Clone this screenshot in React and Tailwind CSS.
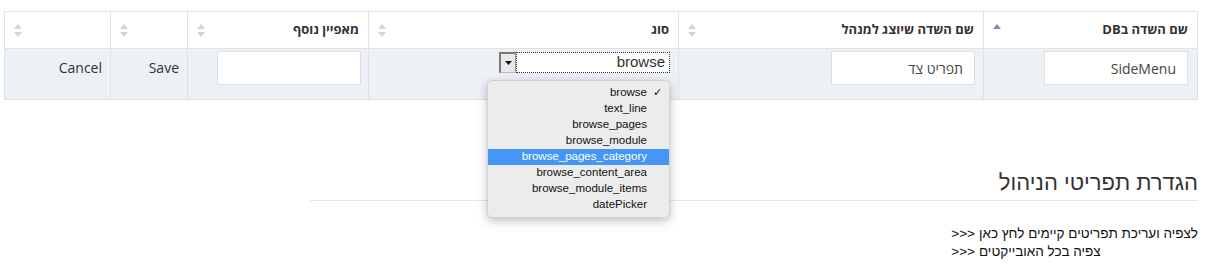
import React from "react";

const SortIcon = ({ active }) => (
  <svg width="8" height="13" viewBox="0 0 8 13" className="shrink-0">
    <polygon points="4,0 8,5 0,5" fill={active ? "#7f82d9" : "#d4d4d4"} />
    {!active && <polygon points="0,8 8,8 4,13" fill="#d4d4d4" />}
  </svg>
);

const columns = [
  { title: "שם השדה בDB", width: "w-[214px]", active: true },
  { title: "שם השדה שיוצג למנהל", width: "w-[305px]" },
  { title: "סוג", width: "w-[310px]" },
  { title: "מאפיין נוסף", width: "w-[181px]" },
  { title: "", width: "w-[77px]" },
  { title: "", width: "w-[106px]" },
];

const options = [
  "browse",
  "text_line",
  "browse_pages",
  "browse_module",
  "browse_pages_category",
  "browse_content_area",
  "browse_module_items",
  "datePicker",
];

const links = ["לצפיה ועריכת תפריטים קיימים לחץ כאן", "צפיה בכל האובייקטים"];

const TextBox = ({ value }) => (
  <input
    readOnly
    value={value}
    dir="ltr"
    className="h-[34px] w-[144px] border border-[#dcdfe3] bg-white px-[11px] text-right text-[14px] text-[#444] outline-none"
  />
);

export default function App() {
  return (
    <div
      dir="rtl"
      className="h-[270px] w-[1206px] overflow-hidden bg-white pl-[5px] pr-[8px] pt-[11px] text-[#333]"
      style={{ fontFamily: '"Open Sans", "Liberation Sans", sans-serif' }}
    >
      <table className="w-[1193px] table-fixed border-collapse border border-[#dedede]">
        <colgroup>
          {columns.map((c, i) => (
            <col key={i} className={c.width} />
          ))}
        </colgroup>
        <thead>
          <tr>
            {columns.map((c, i) => (
              <th
                key={i}
                className="h-[37px] border border-[#e2e2e2] bg-white px-[9px] text-right text-[13px] font-bold"
              >
                <div className="flex items-center justify-between">
                  <span>{c.title}</span>
                  <SortIcon active={c.active} />
                </div>
              </th>
            ))}
          </tr>
        </thead>
        <tbody>
          <tr className="h-[51px] bg-[#edf0f5]">
            <td className="border border-[#e2e2e2] px-[9px] pt-[2px] align-top">
              <TextBox value="SideMenu" />
            </td>
            <td className="border border-[#e2e2e2] px-[8px] pt-[2px] align-top">
              <TextBox value="תפריט צד" />
            </td>
            <td className="relative border border-[#e2e2e2] px-[8px] pt-[3px] align-top">
              <div dir="ltr" className="ml-auto flex h-[21px] w-[171px]">
                <div className="flex h-[21px] w-[17px] items-center justify-center border-l-2 border-t-2 border-r border-b border-l-[#7a7a7a] border-t-[#7a7a7a] border-r-[#9a9a9a] border-b-[#bdbdbd] bg-[#e9e9e9]">
                  <svg width="7" height="4" viewBox="0 0 7 4">
                    <polygon points="0,0 7,0 3.5,4" fill="#111" />
                  </svg>
                </div>
                <div
                  className="flex flex-1 items-center justify-end border border-dotted border-[#333] bg-white pr-[4px] text-[15px] text-[#333]"
                  style={{ fontFamily: '"Liberation Sans", sans-serif' }}
                >
                  browse
                </div>
              </div>
              <div
                className="absolute left-[118px] top-[31px] z-10 w-[183px] rounded-[5px] border border-[#d2d2d2] bg-[#ececec] py-[4px] shadow-[0_3px_10px_rgba(0,0,0,0.25)]"
                style={{ fontFamily: '"Liberation Sans", sans-serif' }}
              >
                {options.map((o, i) => (
                  <div
                    key={o}
                    className={`flex h-[16px] items-center pr-[22px] text-[11.5px] ${
                      i === 4 ? "bg-[#4596f6] text-white" : "text-[#111]"
                    }`}
                  >
                    <span className="relative">
                      {o}
                      {i === 0 && (
                        <span className="absolute right-[-15px] top-0 text-[11px]">✓</span>
                      )}
                    </span>
                  </div>
                ))}
              </div>
            </td>
            <td className="border border-[#e2e2e2] px-[7px] pt-[2px] align-top">
              <TextBox value="" />
            </td>
            <td className="border border-[#e2e2e2] px-[8px] pt-[8px] align-top text-[14px]">
              Save
            </td>
            <td className="border border-[#e2e2e2] px-[8px] pt-[8px] align-top text-[14px]">
              Cancel
            </td>
          </tr>
        </tbody>
      </table>

      <div
        className="ml-auto mt-[70px] w-[888px]"
        style={{ fontFamily: '"Liberation Sans", sans-serif' }}
      >
        <h2 className="pb-[4px] text-[22px] leading-[26px] text-[#333]">הגדרת תפריטי הניהול</h2>
        <div className="h-px bg-[#e6e6e6]" />
        <div dir="ltr" className="mt-[24px] flex justify-end">
          <div className="text-[13.5px] leading-[18px] text-[#111]">
            {links.map((l) => (
              <div key={l} className="flex gap-[4px]">
                <span>&gt;&gt;&gt;</span>
                <span dir="rtl">{l}</span>
              </div>
            ))}
          </div>
        </div>
      </div>
    </div>
  );
}
